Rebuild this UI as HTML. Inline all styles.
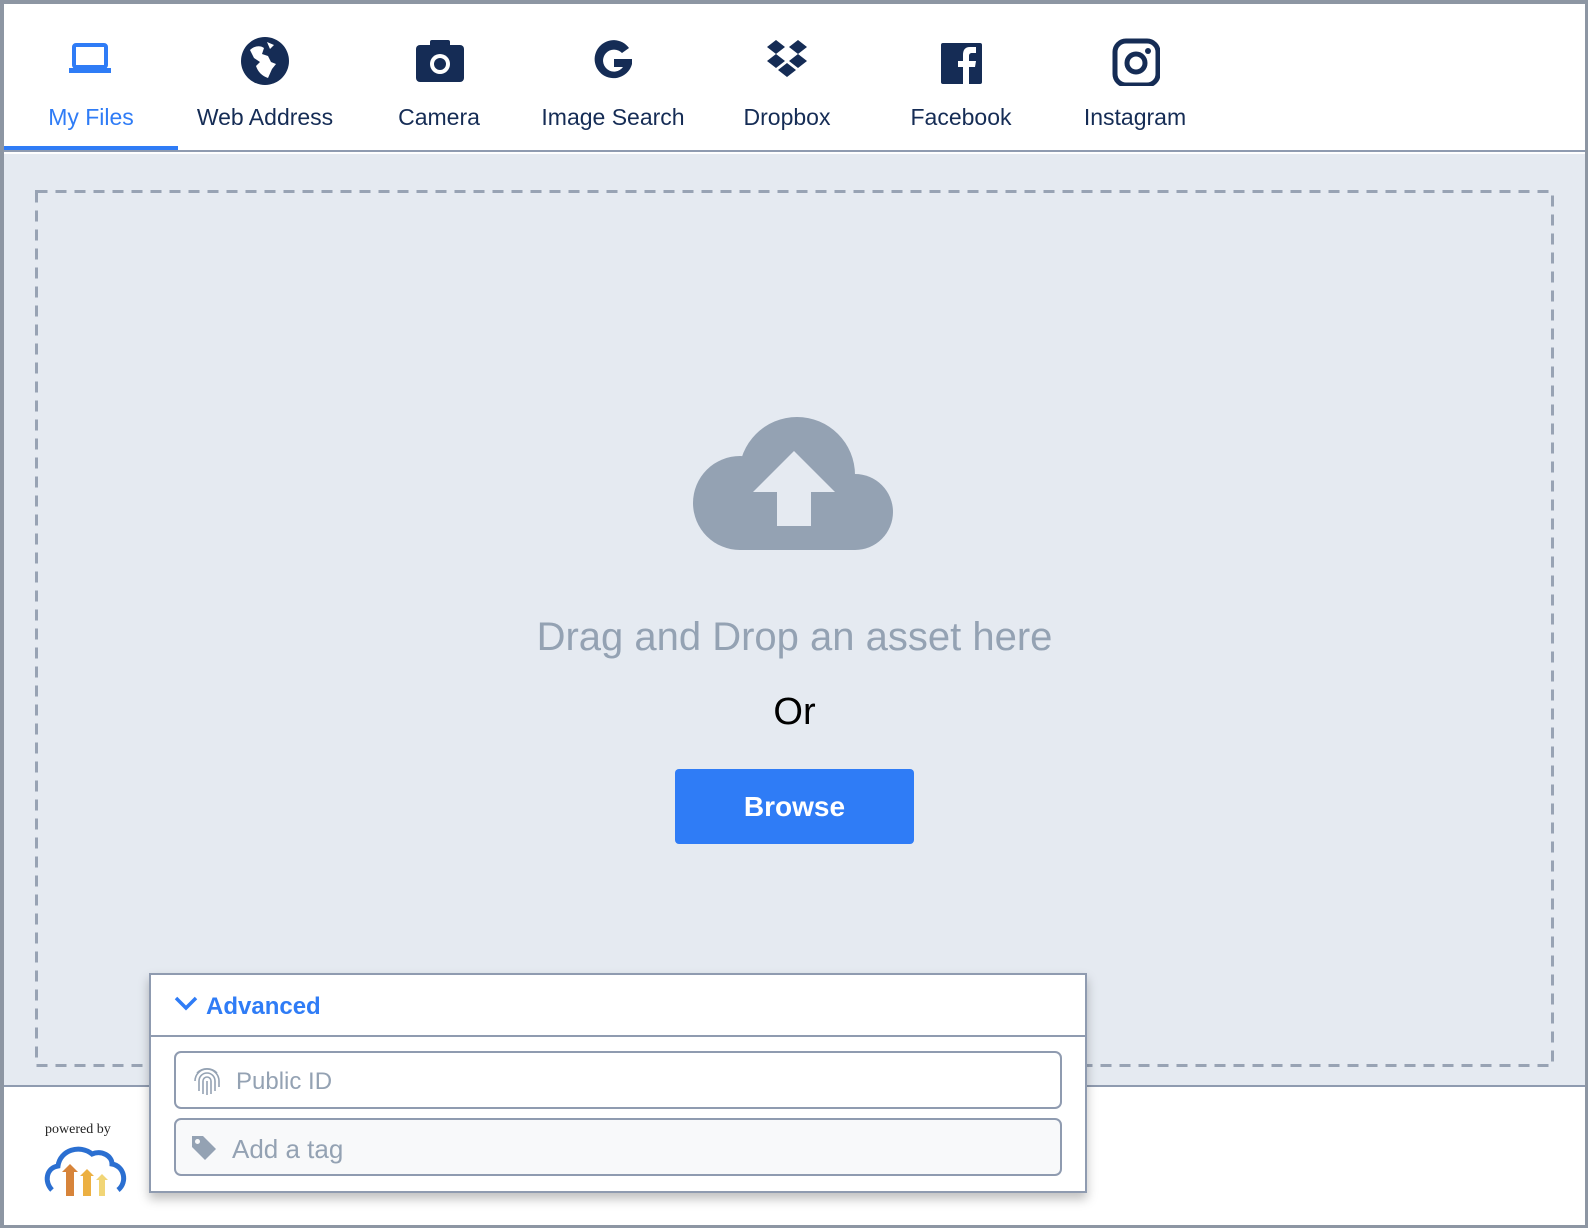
<!DOCTYPE html>
<html><head><meta charset="utf-8"><style>
*{margin:0;padding:0;box-sizing:border-box}
body{width:1588px;height:1228px;background:#fff;font-family:"Liberation Sans",Arial,sans-serif;position:relative;overflow:hidden}
.frame{position:absolute;left:0;top:0;width:1588px;height:1228px;border:4px solid #8d96a3;border-width:4px 3px 3px 4px}
.tabs{position:absolute;left:4px;top:4px;right:3px;height:148px;background:#fff;border-bottom:2px solid #8f9bb0}
.tab{position:absolute;top:0;width:174px;height:146px;text-align:center;color:#152c55;font-size:23px}
.tab svg{position:absolute;left:62px;top:32px}
.tab span{position:absolute;left:0;right:0;top:100px}
.tab.active{color:#2f7cf6;border-bottom:4px solid #2f7cf6}
.main{position:absolute;left:4px;top:154px;right:3px;height:933px;background:#e5eaf1;border-bottom:2px solid #8f9bb0}
.drag{position:absolute;left:0;right:0;top:461px;text-align:center;color:#94a2b3;font-size:40px}
.or{position:absolute;left:0;right:0;top:537px;text-align:center;color:#000;font-size:38px}
.btn{position:absolute;left:671px;top:615px;width:239px;height:75px;background:#2f7cf6;border-radius:4px;color:#fff;font-weight:bold;font-size:28px;text-align:center;line-height:75px}
.adv{position:absolute;left:149px;top:973px;width:938px;height:220px;background:#fff;border:2px solid #8f9bb0;box-shadow:0 6px 10px rgba(0,0,0,.25)}
.advh{height:62px;border-bottom:2px solid #8f9bb0;color:#2f7cf6;font-weight:bold;font-size:24px;position:relative}
.advh span{position:absolute;left:55px;top:18px}
.inp{position:absolute;left:23px;width:888px;height:58px;border:2px solid #8f9bb0;border-radius:7px;color:#94a2b3;font-size:24px}
.inp span{position:absolute;left:60px;top:15px}
.pb{position:absolute;left:45px;top:1122px;font-family:"Liberation Serif",serif;font-size:14px;color:#222}
</style></head><body>
<div class="tabs">
 <div class="tab active" style="left:0"><svg width="50" height="50" viewBox="0 0 50 50"><rect x="8" y="9" width="32" height="22" rx="2" fill="none" stroke="#2f7cf6" stroke-width="4"/><rect x="3" y="32" width="42" height="5" fill="#2f7cf6"/></svg><span>My Files</span></div>
 <div class="tab" style="left:174px"><svg width="50" height="50" viewBox="0 0 50 50"><circle cx="25" cy="25" r="24" fill="#152c55"/><path d="M10 14 C14 10 20 9 24 12 L22 18 L28 20 L31 26 L36 28 L32 33 L28 42 C22 40 18 36 16 30 L20 26 L14 22 Z" fill="#fff"/><path d="M27 6 L34 9 L30 13 Z" fill="#fff"/></svg><span>Web Address</span></div>
 <div class="tab" style="left:348px"><svg width="50" height="50" viewBox="0 0 50 50"><rect x="2" y="9" width="48" height="37" rx="4" fill="#152c55"/><rect x="16" y="4" width="20" height="8" rx="2" fill="#152c55"/><circle cx="26" cy="28" r="10" fill="#fff"/><circle cx="26" cy="28" r="6" fill="#152c55"/></svg><span>Camera</span></div>
 <div class="tab" style="left:522px"><svg width="50" height="50" viewBox="0 0 50 50"><path d="M41 12 A19 19 0 1 0 44 28 L44 23 L26 23 L26 31 L35 31 A11 11 0 1 1 34 17 Z" fill="#152c55"/></svg><span>Image Search</span></div>
 <div class="tab" style="left:696px"><svg width="50" height="50" viewBox="0 0 50 50"><g fill="#152c55"><path d="M14 4 L23 11 L14 18 L5 11Z"/><path d="M36 4 L45 11 L36 18 L27 11Z"/><path d="M14 18 L23 25 L14 32 L5 25Z"/><path d="M36 18 L45 25 L36 32 L27 25Z"/><path d="M25 27 L34 34 L25 41 L16 34Z"/></g></svg><span>Dropbox</span></div>
 <div class="tab" style="left:870px"><svg width="50" height="50" viewBox="0 0 50 50"><rect x="5" y="7" width="41" height="41" rx="2" fill="#152c55"/><path d="M33 48 L33 31 L39 31 L40 25 L33 25 L33 20 C33 18 34 17 36 17 L40 17 L40 11 C38 11 36 11 34 11 C29 11 27 14 27 19 L27 25 L22 25 L22 31 L27 31 L27 48 Z" fill="#fff"/></svg><span>Facebook</span></div>
 <div class="tab" style="left:1044px"><svg width="50" height="50" viewBox="0 0 50 50"><rect x="5" y="5" width="43" height="44" rx="11" fill="none" stroke="#152c55" stroke-width="5"/><circle cx="26" cy="27" r="9" fill="none" stroke="#152c55" stroke-width="5"/><circle cx="38" cy="15" r="3" fill="#152c55"/></svg><span>Instagram</span></div>
</div>
<div class="main">
 <svg style="position:absolute;left:0;top:0" width="1581" height="933"><rect x="32.5" y="37.5" width="1516" height="874" fill="none" stroke="#98a3b4" stroke-width="3" stroke-dasharray="11 8"/><g transform="translate(-4,-154)" fill="#94a2b3"><circle cx="740" cy="503" r="47"/><circle cx="797" cy="475" r="58"/><circle cx="855" cy="512" r="38"/><rect x="740" y="490" width="115" height="60"/><path d="M794 451 L835 492 L811 492 L811 526 L777 526 L777 492 L753 492 Z" fill="#e5eaf1"/></g></svg>
 <div class="drag">Drag and Drop an asset here</div>
 <div class="or">Or</div>
 <div class="btn">Browse</div>
</div>
<div class="pb">powered by</div>
<svg style="position:absolute;left:44px;top:1142px" width="84" height="56" viewBox="0 0 84 56"><path d="M8 48 C0 40 2 26 14 24 C16 8 36 2 48 12 C58 8 68 14 68 22 C80 24 84 40 74 48" fill="none" stroke="#2b6fd1" stroke-width="5"/><path d="M18 30 L26 22 L34 30 L30 30 L30 54 L22 54 L22 30Z" fill="#d7843a"/><path d="M36 34 L43 27 L50 34 L47 34 L47 54 L39 54 L39 34Z" fill="#ecb042"/><path d="M52 38 L58 32 L64 38 L61 38 L61 54 L55 54 L55 38Z" fill="#f1d576"/></svg>
<div class="adv">
 <div class="advh"><svg style="position:absolute;left:22px;top:20px" width="26" height="18" viewBox="0 0 26 18"><path d="M3 3 L13 13 L23 3" fill="none" stroke="#2f7cf6" stroke-width="3.5"/></svg><span>Advanced</span></div>
 <div class="inp" style="top:76px"><svg style="position:absolute;left:16px;top:12px" width="30" height="32" viewBox="0 0 30 32" fill="none" stroke="#94a2b3" stroke-width="1.6"><path d="M5 8 A14 14 0 0 1 25 8"/><path d="M3 16 A12 12 0 0 1 27 16 L27 22"/><path d="M7 26 L7 16 A8 8 0 0 1 23 16 L23 26"/><path d="M11 29 L11 16 A4 4 0 0 1 19 16 L19 29"/><path d="M15 16 L15 30"/></svg><span>Public ID</span></div>
 <div class="inp" style="top:143px;background:#f8f9fa"><svg style="position:absolute;left:14px;top:14px" width="28" height="28" viewBox="0 0 28 28"><path d="M2 2 L13 2 L26 15 L15 26 L2 13 Z" fill="#94a2b3"/><circle cx="7.5" cy="7.5" r="2.5" fill="#f8f9fa"/></svg><span style="left:56px;top:14px;font-size:26px">Add a tag</span></div>
</div>
<div class="frame"></div>
</body></html>
